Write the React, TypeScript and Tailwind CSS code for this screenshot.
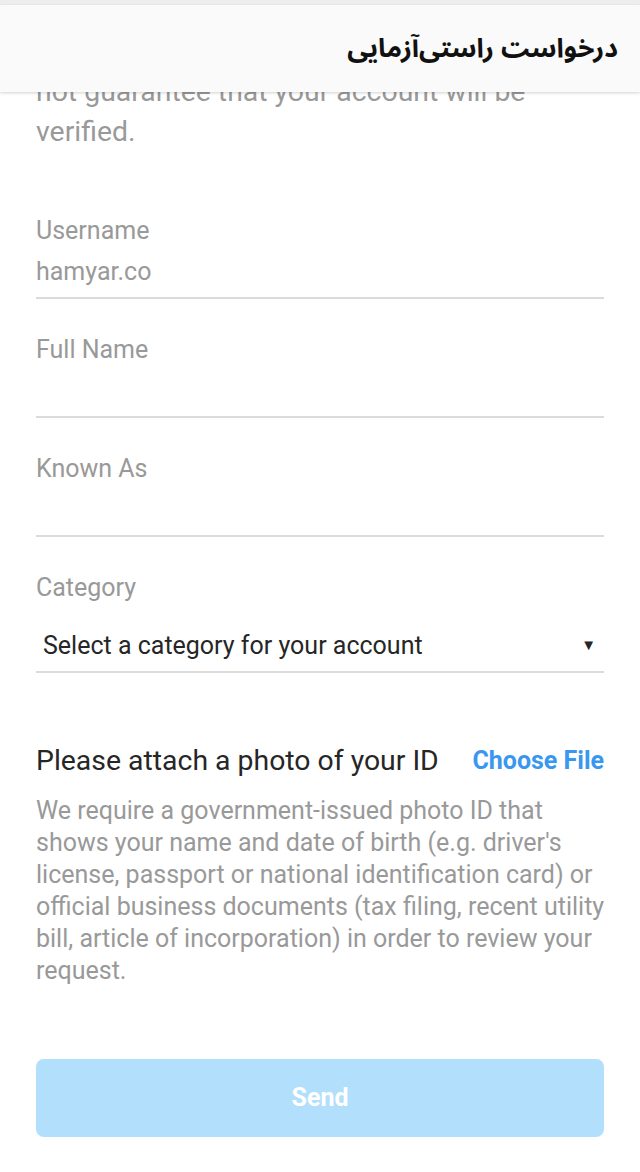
export default function App() {
  const fields = [
    { label: "Username", value: "hamyar.co" },
    { label: "Full Name", value: "" },
    { label: "Known As", value: "" },
  ];
  return (
    <div
      className="relative w-[640px] h-[1172px] overflow-hidden bg-white text-[#999999]"
      style={{ fontFamily: "Roboto, 'Liberation Sans', sans-serif" }}
    >
      <div className="px-[36px] pt-[32px]">
        <p className="text-[28.4px] leading-[40px] text-[#999999]">
          Submitting a request for verification does
          <br />
          not guarantee that your account will be
          <br />
          verified.
        </p>

        <div className="mt-[63px] flex flex-col gap-[35px]">
          {fields.map((f) => (
            <div key={f.label} className="flex flex-col border-b-2 border-[#dbdbdb] pb-[9px]">
              <div className="text-[25px] leading-[32px] text-[#999999]">{f.label}</div>
              <div className="mt-[9px] h-[32px] text-[25px] leading-[32px] text-[#999999]">
                {f.value}
              </div>
            </div>
          ))}
          <div className="flex flex-col">
            <div className="text-[25px] leading-[32px] text-[#999999]">Category</div>
            <div className="mt-[16px] flex h-[53px] items-center justify-between border-b-2 border-[#dbdbdb] pl-[7px] pr-[8px]">
              <span className="text-[25px] leading-[32px] text-[#262626]">
                Select a category for your account
              </span>
              <span className="text-[15px] leading-none text-[#262626]">▼</span>
            </div>
          </div>
        </div>

        <div className="mt-[72px] flex items-center justify-between">
          <span className="text-[28.4px] leading-[32px] text-[#262626]">
            Please attach a photo of your ID
          </span>
          <span className="text-[25px] font-bold leading-[32px] text-[#3897f0]">Choose File</span>
        </div>
        <p className="-mr-[4px] mt-[18px] text-[25px] leading-[32px] text-[#999999]">
          We require a government-issued photo ID that shows your name and date of birth (e.g.
          driver's license, passport or national identification card) or official business
          documents (tax filing, recent utility bill, article of incorporation) in order to review
          your request.
        </p>

        <button className="mt-[72px] flex h-[78px] w-full items-center justify-center rounded-[8px] bg-[#b2dffc] text-[25px] font-bold text-white">
          Send
        </button>
      </div>

      <div className="absolute left-0 right-0 top-0">
        <div className="h-[5px] bg-[#eeeeee]" />
        <div
          className="flex h-[87px] items-center justify-start bg-[#fafafa] pr-[22px] shadow-[0_1px_3px_rgba(0,0,0,0.18)]"
          dir="rtl"
        >
          <span
            className="text-[26.6px] font-bold text-[#111111]"
            style={{ fontFamily: "'Noto Sans Arabic', 'Noto Naskh Arabic', 'DejaVu Sans', sans-serif" }}
          >
            درخواست راستی‌آزمایی
          </span>
        </div>
      </div>
    </div>
  );
}
